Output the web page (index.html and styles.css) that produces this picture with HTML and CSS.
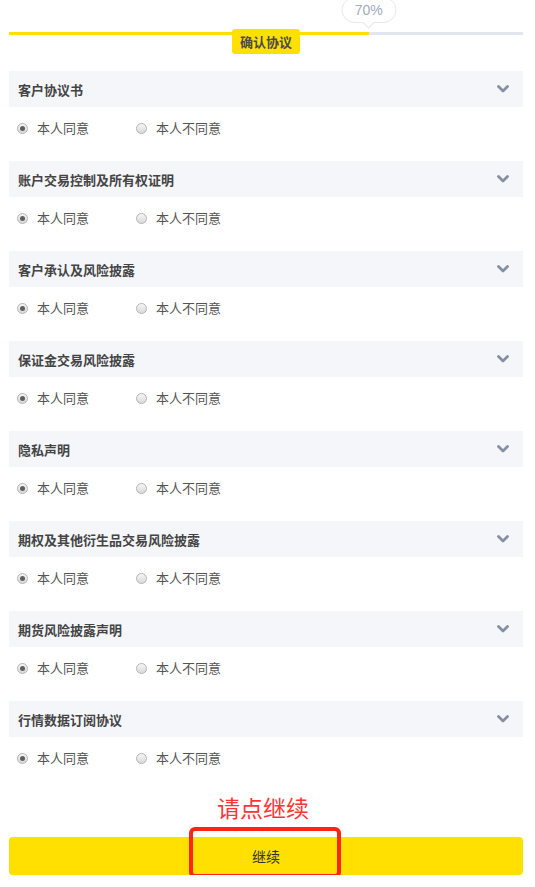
FILE: index.html
```html
<!DOCTYPE html>
<html lang="zh-CN">
<head>
    <meta charset="UTF-8">
    <meta name="viewport" content="width=device-width, initial-scale=1.0">
    <title>确认协议</title>
    <link rel="stylesheet" href="styles.css">
</head>
<body>
    <div class="wrapper">
        <div class="progress">
            <div class="bar">
                <div class="fill" style="width: 70%;"></div>
                <div class="bubble" style="left: 70%;">70%</div>
            </div>
            <div class="step"><span>确认协议</span></div>
        </div>

        <div class="list" id="list"></div>

        <div class="hint">请点继续</div>
        <div class="action">
            <button class="nextBtn">继续</button>
            <div class="mark"></div>
        </div>
    </div>

    <script>
        const docs = ['客户协议书', '账户交易控制及所有权证明', '客户承认及风险披露', '保证金交易风险披露',
            '隐私声明', '期权及其他衍生品交易风险披露', '期货风险披露声明', '行情数据订阅协议'];
        const chevron = '<svg class="arrow" width="12" height="8" viewBox="0 0 12 8"><path d="M1.5 1.5 L6 6 L10.5 1.5" fill="none" stroke="#858fa1" stroke-width="2.8" stroke-linecap="round" stroke-linejoin="round"/></svg>';
        const list = document.getElementById('list');
        docs.forEach((title, i) => {
            list.innerHTML += `
                <div class="item">
                    <div class="itemHead"><h4>${title}</h4>${chevron}</div>
                    <div class="options">
                        <label class="radio"><span class="dot checked"></span>本人同意</label>
                        <label class="radio"><span class="dot"></span>本人不同意</label>
                    </div>
                </div>`;
        });
    </script>
</body>
</html>
```

FILE: styles.css
```css
body {
    margin: 0;
    background-color: #fff;
    font-family: "Noto Sans CJK SC", "Noto Sans", sans-serif;
    color: #555;
}
.wrapper {
    width: 514px;
    margin-left: 9px;
}
.progress {
    height: 71px;
    padding-top: 32px;
    box-sizing: border-box;
}
.bar {
    position: relative;
    height: 3px;
    background: #e2e7ee;
}
.fill {
    height: 3px;
    background: #ffe000;
}
.bubble {
    position: absolute;
    top: -35px;
    transform: translateX(-50%);
    width: 53px;
    height: 24px;
    line-height: 24px;
    border: 1px solid #e8e9ee;
    border-radius: 13px;
    background: #fff;
    text-align: center;
    font-family: "Liberation Sans", sans-serif;
    font-size: 14px;
    color: #a3abbd;
}
.bubble::after {
    content: "";
    position: absolute;
    left: 50%;
    bottom: -5px;
    width: 7px;
    height: 7px;
    margin-left: -4px;
    background: #fff;
    border-right: 1px solid #e8e9ee;
    border-bottom: 1px solid #e8e9ee;
    transform: rotate(45deg);
}
.step {
    display: flex;
    justify-content: center;
    margin-top: -6px;
    position: relative;
}
.step span {
    background: #ffe000;
    border-radius: 3px;
    padding: 0 8px;
    height: 25px;
    line-height: 25px;
    font-size: 13px;
    font-weight: bold;
    color: #4a4a4a;
}
.item {
    height: 90px;
}
.itemHead {
    display: flex;
    align-items: center;
    justify-content: space-between;
    height: 36px;
    padding: 0 14px 0 9px;
    background: #f5f6fa;
}
h4 {
    margin: 0;
    font-size: 13px;
    font-weight: bold;
    color: #444;
}
.options {
    display: flex;
    padding: 12px 0 0 8px;
    line-height: 18px;
    font-size: 13px;
    color: #555;
}
.radio {
    display: flex;
    align-items: center;
    width: 119px;
}
.dot {
    width: 9px;
    height: 9px;
    margin-right: 9px;
    border: 1px solid #b4b4b4;
    border-radius: 50%;
    background: linear-gradient(#f6f6f6, #d9d9d9);
    display: flex;
    align-items: center;
    justify-content: center;
}
.dot.checked::after {
    content: "";
    width: 5px;
    height: 5px;
    border-radius: 50%;
    background: #5e5e5e;
}
.hint {
    margin-top: 1px;
    text-align: center;
    font-size: 23px;
    line-height: 30px;
    color: #ff3535;
    padding-right: 6px;
}
.action {
    position: relative;
    margin-top: 15px;
}
.nextBtn {
    display: block;
    width: 100%;
    height: 38px;
    border: none;
    border-radius: 4px;
    background: #ffe000;
    font-family: inherit;
    font-size: 14px;
    color: #333;
}
.mark {
    position: absolute;
    left: 180px;
    top: -10px;
    width: 144px;
    height: 43px;
    border: 4px solid #ff2414;
    border-radius: 6px;
}
```
